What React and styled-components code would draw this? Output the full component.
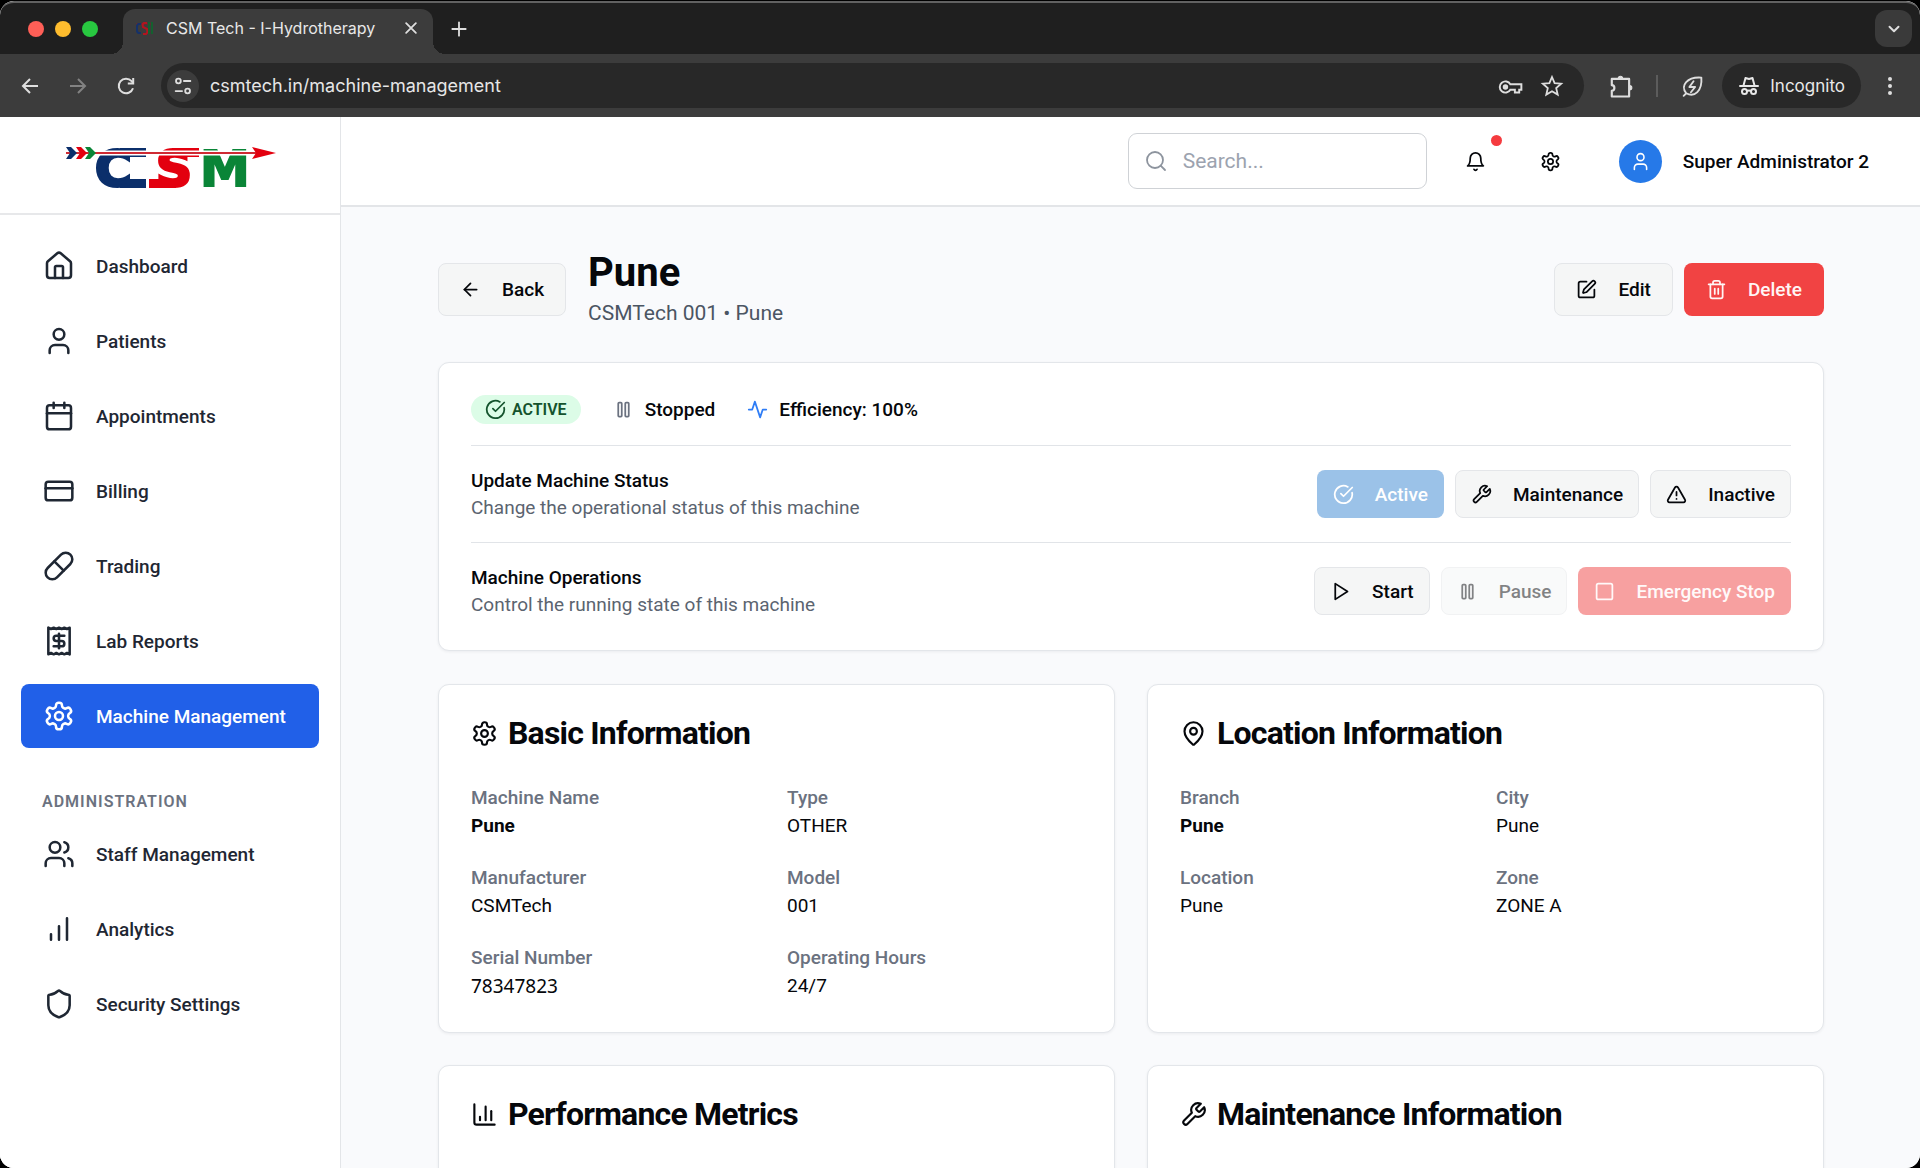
import React from "react";
import styled, { createGlobalStyle, css } from "styled-components";
import {
  ArrowLeft,
  Calendar,
  ChartColumn,
  CircleCheckBig,
  CreditCard,
  House,
  MapPin,
  Pill,
  Search,
  Shield,
  Square,
  SquarePen,
  Trash2,
  TriangleAlert,
  User,
  Users,
} from "lucide-react";

const GlobalStyle = createGlobalStyle`
  *, *::before, *::after { box-sizing: border-box; }
  html, body { margin: 0; background: #000; }
  body { overflow: hidden; font-family: Roboto, "Noto Sans", sans-serif; }
  button, input { font: inherit; color: inherit; }
  button { cursor: pointer; }
  h1, h2, h3, p, dl, dd, ul { margin: 0; padding: 0; }
  svg { flex: none; display: block; }
`;

/* ---------- icons ---------- */

const StrokeIcon = ({ size = 24, strokeWidth = 2, children }) => (
  <svg
    width={size}
    height={size}
    viewBox="0 0 24 24"
    fill="none"
    stroke="currentColor"
    strokeWidth={strokeWidth}
    strokeLinecap="round"
    strokeLinejoin="round"
    aria-hidden="true"
  >
    {children}
  </svg>
);

const Gear = (props) => (
  <StrokeIcon {...props}>
    <path d="M12.22 2h-.44a2 2 0 0 0-2 2v.18a2 2 0 0 1-1 1.73l-.43.25a2 2 0 0 1-2 0l-.15-.08a2 2 0 0 0-2.73.73l-.22.38a2 2 0 0 0 .73 2.73l.15.1a2 2 0 0 1 1 1.72v.51a2 2 0 0 1-1 1.74l-.15.09a2 2 0 0 0-.73 2.73l.22.38a2 2 0 0 0 2.73.73l.15-.08a2 2 0 0 1 2 0l.43.25a2 2 0 0 1 1 1.73V20a2 2 0 0 0 2 2h.44a2 2 0 0 0 2-2v-.18a2 2 0 0 1 1-1.73l.43-.25a2 2 0 0 1 2 0l.15.08a2 2 0 0 0 2.73-.73l.22-.39a2 2 0 0 0-.73-2.73l-.15-.08a2 2 0 0 1-1-1.74v-.5a2 2 0 0 1 1-1.74l.15-.09a2 2 0 0 0 .73-2.73l-.22-.38a2 2 0 0 0-2.73-.73l-.15.08a2 2 0 0 1-2 0l-.43-.25a2 2 0 0 1-1-1.73V4a2 2 0 0 0-2-2z" />
    <circle cx="12" cy="12" r="3" />
  </StrokeIcon>
);

const Receipt = (props) => (
  <StrokeIcon {...props}>
    <path d="M4 2v20l2-1 2 1 2-1 2 1 2-1 2 1 2-1 2 1V2l-2 1-2-1-2 1-2-1-2 1-2-1-2 1Z" />
    <path d="M16 8h-6a2 2 0 1 0 0 4h4a2 2 0 1 1 0 4H8" />
    <path d="M12 17.5v-11" />
  </StrokeIcon>
);

const Bars = (props) => (
  <StrokeIcon {...props}>
    <path d="M12 20V10M18 20V4M6 20v-4" />
  </StrokeIcon>
);

const Wrench = (props) => (
  <StrokeIcon {...props}>
    <path d="M14.7 6.3a1 1 0 0 0 0 1.4l1.6 1.6a1 1 0 0 0 1.4 0l3.77-3.77a6 6 0 0 1-7.94 7.94l-6.91 6.91a2.12 2.12 0 0 1-3-3l6.91-6.91a6 6 0 0 1 7.94-7.94l-3.76 3.76z" />
  </StrokeIcon>
);

const Pause = (props) => (
  <StrokeIcon {...props}>
    <rect x="14" y="4" width="4" height="16" rx="1" />
    <rect x="6" y="4" width="4" height="16" rx="1" />
  </StrokeIcon>
);

const Play = (props) => (
  <StrokeIcon {...props}>
    <path d="M6 3l14 9-14 9z" />
  </StrokeIcon>
);

const Pulse = (props) => (
  <StrokeIcon {...props}>
    <path d="M22 12h-4l-3 9L9 3l-3 9H2" />
  </StrokeIcon>
);

const Bell = (props) => (
  <StrokeIcon {...props}>
    <path d="M6 8a6 6 0 0 1 12 0c0 7 3 9 3 9H3s3-2 3-9" />
    <path d="M10.3 21a1.94 1.94 0 0 0 3.4 0" />
  </StrokeIcon>
);

const BackArrow = () => (
  <StrokeIcon size={24} strokeWidth={2}>
    <path d="M20 12H5M12 5l-7 7 7 7" strokeLinecap="butt" strokeLinejoin="miter" />
  </StrokeIcon>
);

const ForwardArrow = () => (
  <StrokeIcon size={24} strokeWidth={2}>
    <path d="M4 12h15M12 5l7 7-7 7" strokeLinecap="butt" strokeLinejoin="miter" />
  </StrokeIcon>
);

const Reload = () => (
  <StrokeIcon size={24} strokeWidth={2}>
    <path d="M19 14.2A7.3 7.3 0 1 1 17.6 7.2L19 8.8" strokeLinecap="butt" />
    <path d="M19.2 4v5.4h-5.4" strokeLinecap="butt" strokeLinejoin="miter" />
  </StrokeIcon>
);

const SiteControls = () => (
  <StrokeIcon size={22} strokeWidth={2}>
    <circle cx="7" cy="6.500" r="2.600" />
    <path d="M13 6.500h7M4 17.500h7" />
    <circle cx="17" cy="17.500" r="2.600" />
  </StrokeIcon>
);

const KeyIcon = () => (
  <StrokeIcon size={26} strokeWidth={1.8}>
    <path d="M12.300 9.500H22.500v5h-2v2.500h-4v-2.500h-4.200a5.200 5.200 0 1 1 0-5z" strokeLinejoin="miter" />
    <circle cx="7.800" cy="12" r="1.600" fill="currentColor" />
  </StrokeIcon>
);

const StarIcon = () => (
  <StrokeIcon size={24} strokeWidth={1.8}>
    <path d="M12 3l2.600 6.100 6.600.6-5 4.400 1.500 6.500L12 17.200l-5.700 3.400 1.500-6.500-5-4.400 6.600-.6z" strokeLinejoin="miter" />
  </StrokeIcon>
);

const PuzzleIcon = () => (
  <StrokeIcon size={26} strokeWidth={2}>
    <path d="M3.500 4.500H19.500v16.300H3.500v-5.300c3.200-.2 3.200-5 0-5.200z" />
    <path d="M9.500 4a2 2 0 0 1 4 0zM20 10.600a2 2 0 0 1 0 4z" fill="currentColor" strokeWidth="1" />
  </StrokeIcon>
);

const LeafIcon = () => (
  <StrokeIcon size={25} strokeWidth={1.8}>
    <path d="M3.500 21l2.500-2.500C0 11 7 2.500 20.500 3.500 21.500 16 14 23 6 18.500" />
    <path d="M13 7l-4 5.500h5.500l-4 5" />
  </StrokeIcon>
);

const IncognitoIcon = () => (
  <StrokeIcon size={24} strokeWidth={2}>
    <path d="M3 12h18" />
    <path d="M6.500 11.500L8.500 4l3.500 1 3.500-1 2 7.500" />
    <circle cx="7.500" cy="17.500" r="2.500" />
    <circle cx="16.500" cy="17.500" r="2.500" />
    <path d="M10 17q2-1 4 0" />
  </StrokeIcon>
);

const CsmLogo = () => (
  <svg width="212" height="72" viewBox="64 132 212 72" role="img" aria-label="CSM">
    <g fill="#0b2f6b">
      <rect x="120" y="148" width="26" height="9" />
      <rect x="120" y="179" width="26" height="9" />
    </g>
    <g fill="#e3000f">
      <rect x="172" y="148" width="27" height="9" />
      <rect x="149" y="179" width="27" height="9" />
    </g>
    <g fontFamily='"DejaVu Sans", sans-serif' fontWeight="700" fontSize="50" strokeWidth="3">
      <text x="95" y="186" fill="#0b2f6b" stroke="#0b2f6b">C</text>
      <text x="156" y="186" fill="#e3000f" stroke="#e3000f">S</text>
      <text x="200" y="186" fill="#0a8537" stroke="#0a8537" strokeWidth="2">M</text>
    </g>
    <path d="M94 153H256" stroke="#fff" strokeWidth="5" />
    <path d="M66 153H256" stroke="#cf2a33" strokeWidth="2" />
    <path d="M252 147l24 6-24 6 4-6z" fill="#e3000f" />
    <path d="M66 147h5l6 6-6 6h-5l4-6z" fill="#0b2f6b" />
    <path d="M76 147h5l6 6-6 6h-5l4-6z" fill="#e3000f" />
    <path d="M85 147h5l6 6-6 6h-5l4-6z" fill="#0a8537" />
  </svg>
);

const Favicon = () => (
  <svg width="18" height="18" viewBox="0 0 18 18" aria-hidden="true">
    <path d="M0 5h17" stroke="#7a2026" strokeWidth="1" />
    <path d="M5 5H3q-2 0-2 3v3q0 3 2 3h2" fill="none" stroke="#14316b" strokeWidth="2" />
    <path d="M11 4H8q-2 1-1 4l4 2q1 4-1 5H7" fill="none" stroke="#b3141f" strokeWidth="2" />
    <path d="M13 3v12M16 3v12" stroke="#14602f" strokeWidth="2" />
  </svg>
);

/* ---------- browser frame ---------- */

const Frame = styled.div`
  display: flex;
  flex-direction: column;
  height: 100vh;
  padding-top: 1px;
  overflow: hidden;
  background: #000;
`;

const BrowserWindow = styled.div`
  display: flex;
  flex-direction: column;
  flex: 1;
  min-height: 0;
  overflow: hidden;
  border-radius: 14px;
  background: #fff;
`;

const TabStrip = styled.div`
  display: flex;
  align-items: center;
  height: 53px;
  padding: 0 8px 0 28px;
  border-top: 2px solid #616161;
  border-radius: 14px 14px 0 0;
  background: #1f1f1f;
  color: #e8e8e8;
  font-family: Inter, "Noto Sans", sans-serif;
`;

const TrafficLights = styled.div`
  display: flex;
  gap: 11px;
  margin-right: 25px;
`;

const Light = styled.button`
  width: 16px;
  height: 16px;
  padding: 0;
  border: 0;
  border-radius: 50%;
  background: ${(p) => p.$color};
`;

const Tab = styled.div`
  position: relative;
  display: flex;
  align-items: center;
  align-self: flex-end;
  gap: 12px;
  width: 310px;
  height: 45px;
  padding: 0 10px 8px 13px;
  border-radius: 12px 12px 0 0;
  background: #3c3c3c;
  font-size: 16px;
  line-height: 24px;

  &::before,
  &::after {
    content: "";
    position: absolute;
    bottom: 0;
    width: 12px;
    height: 12px;
  }
  &::before {
    left: -12px;
    background: radial-gradient(circle at 0 0, transparent 12px, #3c3c3c 12px);
  }
  &::after {
    right: -12px;
    background: radial-gradient(circle at 100% 0, transparent 12px, #3c3c3c 12px);
  }
`;

const TabTitle = styled.span`
  flex: 1;
  white-space: nowrap;
`;

const ChromeButton = styled.button`
  display: grid;
  place-items: center;
  width: ${(p) => p.$width || 24}px;
  height: ${(p) => p.$height || 24}px;
  padding: 0;
  border: 0;
  border-radius: 12px;
  background: ${(p) => p.$fill || "transparent"};
  color: ${(p) => (p.$dim ? "#828282" : "#dedede")};
`;

const NewTab = styled(ChromeButton)`
  margin: 0 auto 0 14px;
`;

const Toolbar = styled.div`
  display: flex;
  align-items: center;
  height: 63px;
  padding: 0 18px;
  background: #3c3c3c;
  color: #dedede;
  font-family: Inter, "Noto Sans", sans-serif;
  font-size: 18px;
`;

const HistoryButtons = styled.div`
  display: flex;
  gap: 24px;
  margin-right: 23px;
`;

const AddressBar = styled.div`
  display: flex;
  align-items: center;
  gap: 11px;
  flex: 1;
  height: 45px;
  padding: 0 20px 0 6px;
  border-radius: 23px;
  background: #282828;
`;

const SiteButton = styled(ChromeButton)`
  border-radius: 50%;
`;

const Address = styled.input`
  flex: 1;
  min-width: 0;
  height: 32px;
  padding: 0;
  border: 0;
  outline: 0;
  background: transparent;
  color: #e6e6e6;
  line-height: 24px;
`;

const AddressActions = styled.div`
  display: flex;
  gap: 17px;
`;

const ToolbarEnd = styled.div`
  display: flex;
  align-items: center;
  gap: 22px;
  margin-left: 24px;
`;

const ToolbarRule = styled.span`
  width: 2px;
  height: 22px;
  background: #5c5c5c;
`;

const IncognitoChip = styled.span`
  display: flex;
  align-items: center;
  gap: 9px;
  height: 45px;
  margin: 0 17px 0 -5px;
  padding: 0 16px 0 15px;
  border-radius: 23px;
  background: #282828;
  color: #e8e8e8;
  font-size: 17px;
`;

/* ---------- app shell ---------- */

const Shell = styled.div`
  display: flex;
  flex: 1;
  min-height: 0;
  background: #f9fafc;
  color: #05070b;
  font-size: 19px;
  line-height: 27px;
`;

const Sidebar = styled.aside`
  display: flex;
  flex-direction: column;
  flex: none;
  width: 341px;
  border-right: 1px solid #e3e5e8;
  background: #fff;
`;

const Brand = styled.a`
  display: flex;
  justify-content: center;
  padding: 15px 0 9px;
  border-bottom: 2px solid #e7e8ea;
`;

const SideNav = styled.nav`
  padding: 19px 21px;
`;

const NavList = styled.ul`
  display: flex;
  flex-direction: column;
  gap: 11px;
  list-style: none;
`;

const NavLink = styled.a`
  display: flex;
  align-items: center;
  gap: 21px;
  height: 64px;
  padding: 0 22px;
  border-radius: 8px;
  background: ${(p) => (p.$active ? "#2160e8" : "transparent")};
  color: ${(p) => (p.$active ? "#fff" : "#1f2733")};
  font-weight: 500;
  text-decoration: none;
`;

const NavHeading = styled.h3`
  margin: 40px 0 7px;
  padding: 0 21px;
  color: #6b7280;
  font-size: 16px;
  font-weight: 600;
  line-height: 27px;
  letter-spacing: 1px;
  text-transform: uppercase;
`;

const Workspace = styled.div`
  display: flex;
  flex-direction: column;
  flex: 1;
  min-width: 0;
`;

const TopBar = styled.header`
  display: flex;
  align-items: center;
  justify-content: flex-end;
  height: 90px;
  padding: 0 51px 0 32px;
  border-bottom: 2px solid #e3e5e8;
  background: #fff;
`;

const SearchBox = styled.label`
  display: flex;
  align-items: center;
  gap: 15px;
  width: 299px;
  height: 56px;
  padding: 0 15px;
  border: 1px solid #cfd2d6;
  border-radius: 9px;
  color: #8d949e;
`;

const SearchInput = styled.input`
  width: 100%;
  min-width: 0;
  padding: 0;
  border: 0;
  outline: 0;
  background: transparent;
  color: #111827;
  font-size: 21px;
  line-height: 32px;

  &::placeholder {
    color: #9ca3af;
    opacity: 1;
  }
`;

const IconButton = styled.button`
  position: relative;
  display: grid;
  place-items: center;
  width: 53px;
  height: 53px;
  margin-left: 22px;
  padding: 0;
  border: 0;
  background: transparent;
`;

const UnreadDot = styled.span`
  position: absolute;
  top: 0;
  right: 0;
  width: 11px;
  height: 11px;
  border-radius: 50%;
  background: #f53b3f;
`;

const Account = styled.button`
  display: flex;
  align-items: center;
  gap: 21px;
  margin-left: 42px;
  padding: 0;
  border: 0;
  background: transparent;
  font-weight: 500;
`;

const Avatar = styled.span`
  display: grid;
  place-items: center;
  width: 43px;
  height: 43px;
  border-radius: 50%;
  background: #2679e8;
  color: #fff;
`;

const Page = styled.main`
  display: flex;
  flex-direction: column;
  gap: 33px;
  flex: 1;
  min-height: 0;
  overflow: hidden;
  padding: 42px 96px 0 97px;
`;

/* ---------- page parts ---------- */

const PageHead = styled.div`
  display: flex;
  align-items: center;
  gap: 22px;
`;

const PageTitle = styled.h1`
  font-size: 40px;
  font-weight: 700;
  line-height: 48px;
`;

const PageSubtitle = styled.p`
  color: #4b5563;
  font-size: 21px;
  line-height: 32px;
`;

const ButtonRow = styled.div`
  display: flex;
  gap: 11px;
  margin-left: auto;
`;

const tones = {
  outline: css`
    border-color: #e4e6e9;
    background: #f5f6f6;
    color: #05070b;
  `,
  primary: css`
    background: #3a86d2;
    color: #fff;
  `,
  danger: css`
    background: #f14343;
    color: #fff5f5;
  `,
};

const Button = styled.button`
  display: inline-flex;
  align-items: center;
  gap: 21px;
  height: ${(p) => (p.$small ? 48 : 53)}px;
  padding: 0 ${(p) => (p.$small ? 15 : 21)}px;
  border: 1px solid transparent;
  border-radius: 8px;
  font-weight: 500;
  white-space: nowrap;
  ${(p) => tones[p.$tone || "outline"]}

  &:disabled {
    opacity: 0.5;
    cursor: default;
  }
`;

const Card = styled.section`
  padding: 32px;
  border: 1px solid #e3e6ea;
  border-radius: 11px;
  background: #fff;
  box-shadow: 0 1px 3px rgba(16, 24, 40, 0.06);
`;

const StatusLine = styled.div`
  display: flex;
  align-items: center;
  gap: 32px;
  padding-bottom: 21px;
`;

const Badge = styled.span`
  display: inline-flex;
  align-items: center;
  gap: 6px;
  height: 29px;
  padding: 0 14px;
  border-radius: 15px;
  background: #dcfce7;
  color: #14532d;
  font-size: 16px;
  font-weight: 600;
`;

const Fact = styled.span`
  display: flex;
  align-items: center;
  gap: 11px;
  height: 29px;
  font-weight: 500;

  svg {
    color: ${(p) => p.$iconColor};
  }
`;

const ControlRow = styled.div`
  display: flex;
  align-items: center;
  padding: 21px 0;
  border-top: 1px solid #e1e4e8;

  &:last-child {
    padding-bottom: 0;
  }
`;

const ControlTitle = styled.h3`
  font-size: 19px;
  font-weight: 500;
  line-height: 27px;
`;

const ControlHint = styled.p`
  color: #5b6470;
`;

const CardGrid = styled.div`
  display: grid;
  grid-template-columns: 1fr 1fr;
  gap: 32px;
`;

const CardTitle = styled.h2`
  display: flex;
  align-items: center;
  gap: 10px;
  margin-bottom: 35px;
  font-size: 32px;
  font-weight: 700;
  line-height: 32px;
  letter-spacing: -0.025em;
`;

const Details = styled.dl`
  display: grid;
  grid-template-columns: 1fr 1fr;
  gap: 24px 21px;
`;

const Term = styled.dt`
  color: #6b7280;
  font-weight: 500;
  line-height: 28px;
`;

const Value = styled.dd`
  font-family: ${(p) => (p.$code ? '"Noto Sans", sans-serif' : "inherit")};
  font-weight: ${(p) => (p.$strong ? 700 : 400)};
  line-height: 28px;
`;

/* ---------- data ---------- */

const mainLinks = [
  ["Dashboard", House],
  ["Patients", User],
  ["Appointments", Calendar],
  ["Billing", CreditCard],
  ["Trading", Pill],
  ["Lab Reports", Receipt],
  ["Machine Management", Gear],
];

const adminLinks = [
  ["Staff Management", Users],
  ["Analytics", Bars],
  ["Security Settings", Shield],
];

const basicInfo = [
  { term: "Machine Name", value: "Pune", strong: true },
  { term: "Type", value: "OTHER" },
  { term: "Manufacturer", value: "CSMTech" },
  { term: "Model", value: "001" },
  { term: "Serial Number", value: "78347823", code: true },
  { term: "Operating Hours", value: "24/7" },
];

const locationInfo = [
  { term: "Branch", value: "Pune", strong: true },
  { term: "City", value: "Pune" },
  { term: "Location", value: "Pune" },
  { term: "Zone", value: "ZONE A" },
];

const NavItems = ({ links, current }) => (
  <NavList>
    {links.map(([name, Icon]) => (
      <li key={name}>
        <NavLink href="#" $active={name === current} aria-current={name === current ? "page" : undefined}>
          <Icon size={32} strokeWidth={1.9} />
          {name}
        </NavLink>
      </li>
    ))}
  </NavList>
);

const InfoCard = ({ title, icon: Icon, items = [] }) => (
  <Card>
    <CardTitle>
      <Icon size={27} strokeWidth={1.9} />
      {title}
    </CardTitle>
    <Details>
      {items.map((item) => (
        <div key={item.term}>
          <Term>{item.term}</Term>
          <Value $strong={item.strong} $code={item.code}>
            {item.value}
          </Value>
        </div>
      ))}
    </Details>
  </Card>
);

const Browser = ({ children }) => (
  <Frame>
    <BrowserWindow>
      <TabStrip>
        <TrafficLights>
          <Light $color="#ff5f57" aria-label="Close window" />
          <Light $color="#febc2e" aria-label="Minimize window" />
          <Light $color="#28c840" aria-label="Zoom window" />
        </TrafficLights>
        <Tab>
          <Favicon />
          <TabTitle>CSM Tech - I-Hydrotherapy</TabTitle>
          <ChromeButton aria-label="Close tab">
            <StrokeIcon size={18} strokeWidth={2.4}>
              <path d="M5.500 5.500l13 13M18.500 5.500l-13 13" />
            </StrokeIcon>
          </ChromeButton>
        </Tab>
        <NewTab aria-label="New tab">
          <StrokeIcon size={20} strokeWidth={2.2}>
            <path d="M12 4v16M4 12h16" />
          </StrokeIcon>
        </NewTab>
        <ChromeButton $width={37} $height={37} $fill="#3a3a3a" aria-label="Search tabs">
          <StrokeIcon size={18} strokeWidth={2.6}>
            <path d="M6 9l6 6 6-6" />
          </StrokeIcon>
        </ChromeButton>
      </TabStrip>
      <Toolbar>
        <HistoryButtons>
          <ChromeButton aria-label="Back"><BackArrow /></ChromeButton>
          <ChromeButton $dim aria-label="Forward"><ForwardArrow /></ChromeButton>
          <ChromeButton aria-label="Reload"><Reload /></ChromeButton>
        </HistoryButtons>
        <AddressBar>
          <SiteButton $width={32} $height={32} $fill="#3c3c3c" aria-label="Site information">
            <SiteControls />
          </SiteButton>
          <Address aria-label="Address" defaultValue="csmtech.in/machine-management" />
          <AddressActions>
            <ChromeButton $width={26} aria-label="Passwords"><KeyIcon /></ChromeButton>
            <ChromeButton aria-label="Bookmark this page"><StarIcon /></ChromeButton>
          </AddressActions>
        </AddressBar>
        <ToolbarEnd>
          <ChromeButton $width={26} aria-label="Extensions"><PuzzleIcon /></ChromeButton>
          <ToolbarRule />
          <ChromeButton $width={25} aria-label="Energy saver"><LeafIcon /></ChromeButton>
          <IncognitoChip>
            <IncognitoIcon />
            Incognito
          </IncognitoChip>
        </ToolbarEnd>
        <ChromeButton aria-label="Browser menu">
          <svg width="24" height="24" viewBox="0 0 24 24" fill="currentColor" aria-hidden="true">
            <circle cx="12" cy="5" r="2" />
            <circle cx="12" cy="12" r="2" />
            <circle cx="12" cy="19" r="2" />
          </svg>
        </ChromeButton>
      </Toolbar>
      {children}
    </BrowserWindow>
  </Frame>
);

export default function App() {
  return (
    <>
      <GlobalStyle />
      <Browser>
        <Shell>
          <Sidebar>
            <Brand href="#">
              <CsmLogo />
            </Brand>
            <SideNav aria-label="Main">
              <NavItems links={mainLinks} current="Machine Management" />
              <NavHeading>Administration</NavHeading>
              <NavItems links={adminLinks} />
            </SideNav>
          </Sidebar>
          <Workspace>
            <TopBar>
              <SearchBox>
                <Search size={24} strokeWidth={1.8} aria-hidden="true" />
                <SearchInput type="search" placeholder="Search..." aria-label="Search" />
              </SearchBox>
              <IconButton aria-label="Notifications">
                <Bell size={21} />
                <UnreadDot />
              </IconButton>
              <IconButton aria-label="Settings">
                <Gear size={21} />
              </IconButton>
              <Account>
                <Avatar>
                  <User size={21} strokeWidth={1.8} />
                </Avatar>
                Super Administrator 2
              </Account>
            </TopBar>
            <Page>
              <PageHead>
                <Button>
                  <ArrowLeft size={21} />
                  Back
                </Button>
                <div>
                  <PageTitle>Pune</PageTitle>
                  <PageSubtitle>CSMTech 001 • Pune</PageSubtitle>
                </div>
                <ButtonRow>
                  <Button>
                    <SquarePen size={21} />
                    Edit
                  </Button>
                  <Button $tone="danger">
                    <Trash2 size={21} />
                    Delete
                  </Button>
                </ButtonRow>
              </PageHead>

              <Card>
                <StatusLine>
                  <Badge>
                    <CircleCheckBig size={21} />
                    ACTIVE
                  </Badge>
                  <Fact $iconColor="#6b7280">
                    <Pause size={21} />
                    Stopped
                  </Fact>
                  <Fact $iconColor="#2f7df6">
                    <Pulse size={21} />
                    Efficiency: 100%
                  </Fact>
                </StatusLine>
                <ControlRow>
                  <div>
                    <ControlTitle>Update Machine Status</ControlTitle>
                    <ControlHint>Change the operational status of this machine</ControlHint>
                  </div>
                  <ButtonRow>
                    <Button $small $tone="primary" disabled>
                      <CircleCheckBig size={21} />
                      Active
                    </Button>
                    <Button $small>
                      <Wrench size={21} />
                      Maintenance
                    </Button>
                    <Button $small>
                      <TriangleAlert size={21} />
                      Inactive
                    </Button>
                  </ButtonRow>
                </ControlRow>
                <ControlRow>
                  <div>
                    <ControlTitle>Machine Operations</ControlTitle>
                    <ControlHint>Control the running state of this machine</ControlHint>
                  </div>
                  <ButtonRow>
                    <Button $small>
                      <Play size={21} />
                      Start
                    </Button>
                    <Button $small disabled>
                      <Pause size={21} />
                      Pause
                    </Button>
                    <Button $small $tone="danger" disabled>
                      <Square size={21} />
                      Emergency Stop
                    </Button>
                  </ButtonRow>
                </ControlRow>
              </Card>

              <CardGrid>
                <InfoCard title="Basic Information" icon={Gear} items={basicInfo} />
                <InfoCard title="Location Information" icon={MapPin} items={locationInfo} />
                <InfoCard title="Performance Metrics" icon={ChartColumn} />
                <InfoCard title="Maintenance Information" icon={Wrench} />
              </CardGrid>
            </Page>
          </Workspace>
        </Shell>
      </Browser>
    </>
  );
}
